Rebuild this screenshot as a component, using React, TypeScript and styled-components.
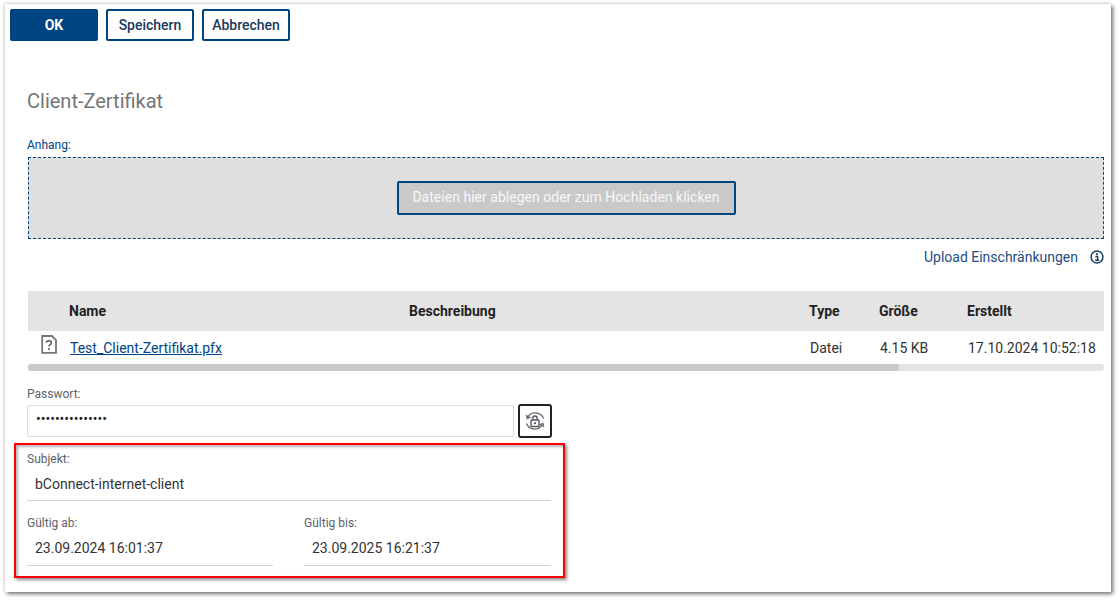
import React from "react";
import styled, { createGlobalStyle } from "styled-components";

const Global = createGlobalStyle`
  html, body { margin: 0; padding: 0; background: #fff; }
  body { font-family: Roboto, "Liberation Sans", sans-serif; width: 1120px; height: 601px; overflow: hidden; }
`;

const Panel = styled.div`
  position: relative;
  box-sizing: border-box;
  width: 1106px;
  height: 588px;
  margin: 4px 0 0 5px;
  padding: 5px 7px 0 22px;
  background: #fff;
  box-shadow: 2px 2px 4px rgba(0,0,0,.55), -1px -1px 3px rgba(0,0,0,.12);
`;

const Toolbar = styled.div`
  display: flex;
  gap: 8px;
  margin-left: -17px;
`;

const Button = styled.button<{ $primary?: boolean }>`
  box-sizing: border-box;
  width: 88px;
  height: 32px;
  padding: 0;
  border: 2px solid #004481;
  border-radius: 2px;
  background: ${p => (p.$primary ? "#004481" : "#fff")};
  color: ${p => (p.$primary ? "#fff" : "#1c3a5c")};
  font: ${p => (p.$primary ? 700 : 500)} 14px Roboto, sans-serif;
`;

const Title = styled.h1`
  margin: 48px 0 0;
  height: 24px;
  font: 400 20px/24px Roboto, sans-serif;
  color: #757575;
`;

const AttachLabel = styled.div`
  margin-top: 25px;
  height: 14px;
  font: 400 12px/14px Roboto, sans-serif;
  color: #004481;
`;

const DropZone = styled.div`
  box-sizing: border-box;
  margin: 5px 0 0 1px;
  height: 82px;
  display: flex;
  align-items: center;
  justify-content: center;
  padding-bottom: 1px;
  background: #dfdfdf;
  border: 1px dashed #004481;
`;

const DropButton = styled.div`
  box-sizing: border-box;
  width: 339px;
  height: 34px;
  padding-bottom: 2px;
  display: flex;
  align-items: center;
  justify-content: center;
  background: #c9c9c9;
  border: 2px solid #004481;
  border-radius: 2px;
  color: #f8f8f8;
  font: 400 14px Roboto, sans-serif;
  letter-spacing: 0.02px;
`;

const UploadRow = styled.div`
  display: flex;
  justify-content: flex-end;
  align-items: center;
  gap: 12px;
  height: 18px;
  margin-top: 9px;
  font: 400 14px/18px Roboto, sans-serif;
  color: #1e4e82;
`;

const Table = styled.div`
  margin: 25px 0 0 1px;
`;

const Row = styled.div<{ $head?: boolean }>`
  display: grid;
  grid-template-columns: 41px 340px 400px 70px 88px 1fr;
  align-items: center;
  height: ${p => (p.$head ? 40 : 33)}px;
  background: ${p => (p.$head ? "#e4e4e4" : "#fff")};
  color: ${p => (p.$head ? "#222" : "#333")};
  font: ${p => (p.$head ? 700 : 400)} 14px Roboto, sans-serif;
`;

const Cell = styled.div<{ $shift?: number }>`
  padding-left: ${p => p.$shift ?? 0}px;
  white-space: nowrap;
`;

const FileLink = styled.a`
  color: #004481;
  text-decoration: underline;
  padding-left: 1px;
`;

const FileIcon = styled.svg`
  display: block;
  margin: -6px 0 0 13px;
`;

const Track = styled.div`
  height: 7px;
  background: #e4e4e4;
  border-radius: 3px;
`;

const Thumb = styled.div`
  height: 100%;
  background: #c8c8c8;
  border-radius: 3px;
`;

const FieldLabel = styled.div<{ $top: number }>`
  margin-top: ${p => p.$top}px;
  height: 14px;
  font: 400 12px/14px Roboto, sans-serif;
  color: #5f5f6b;
`;

const PassRow = styled.div`
  display: flex;
  align-items: center;
  gap: 4px;
  margin-top: 3px;
  height: 34px;
`;

const PassInput = styled.div`
  box-sizing: border-box;
  width: 487px;
  height: 32px;
  padding: 0 8px 5px;
  display: flex;
  align-items: center;
  border: 1px solid #dcdcdc;
  border-radius: 2px;
  color: #222;
  font: 400 14px Roboto, sans-serif;
`;

const IconButton = styled.div`
  box-sizing: border-box;
  width: 34px;
  height: 34px;
  display: flex;
  align-items: center;
  justify-content: center;
  border: 2px solid #222;
  border-radius: 3px;
  background: #fff;
`;

const Value = styled.div<{ $width: number; $height: number }>`
  box-sizing: border-box;
  width: ${p => p.$width}px;
  height: ${p => p.$height}px;
  padding: 8px 8px 0;
  border-bottom: 1px solid #d2d2d2;
  font: 400 14px/20px Roboto, sans-serif;
  color: #333;
`;

const DateGrid = styled.div`
  display: flex;
  gap: 31px;
`;

const DateCol = styled.div``;

const Annotation = styled.div`
  position: absolute;
  left: 9px;
  top: 439px;
  width: 551px;
  height: 135px;
  box-sizing: border-box;
  border: 2px solid #f00;
  box-shadow: 2px 2px 3px rgba(0,0,0,.45), inset 2px 2px 3px rgba(0,0,0,.3);
  pointer-events: none;
`;

export default function App() {
  return (
    <>
      <Global />
      <Panel>
        <Toolbar>
          <Button $primary>OK</Button>
          <Button>Speichern</Button>
          <Button>Abbrechen</Button>
        </Toolbar>
        <Title>Client-Zertifikat</Title>
        <AttachLabel>Anhang:</AttachLabel>
        <DropZone>
          <DropButton>Dateien hier ablegen oder zum Hochladen klicken</DropButton>
        </DropZone>
        <UploadRow>
          <span>Upload Einschränkungen</span>
          <svg width="14" height="14" viewBox="0 0 14 14" fill="none">
            <circle cx="7" cy="7" r="5.9" stroke="#1e3f63" strokeWidth="1.5" />
            <circle cx="7" cy="4.1" r="1.1" fill="#1e3f63" />
            <path d="M5.4 6.4H7.6V9.8M5.2 10.2H9.2" stroke="#1e3f63" strokeWidth="1.5" />
          </svg>
        </UploadRow>
        <Table>
          <Row $head>
            <Cell />
            <Cell>Name</Cell>
            <Cell>Beschreibung</Cell>
            <Cell>Type</Cell>
            <Cell>Größe</Cell>
            <Cell>Erstellt</Cell>
          </Row>
          <Row>
            <Cell>
              <FileIcon width="16" height="19" viewBox="0 0 16 19" fill="none">
                <path d="M1.2 1H11L15 5V17.8H1.2Z" stroke="#6f7880" strokeWidth="1.8" />
                <path d="M5.4 7.8C5.4 5 10.4 5 10.4 7.8C10.4 9.8 8 9.6 8 11.6" stroke="#555" strokeWidth="1.5" />
                <circle cx="8" cy="14" r="1" fill="#555" />
              </FileIcon>
            </Cell>
            <Cell><FileLink href="#">Test_Client-Zertifikat.pfx</FileLink></Cell>
            <Cell />
            <Cell $shift={1}>Datei</Cell>
            <Cell $shift={1}>4.15 KB</Cell>
            <Cell $shift={1}>17.10.2024 10:52:18</Cell>
          </Row>
          <Track>
            <Thumb style={{ width: `${(871 / 1076) * 100}%` }} />
          </Track>
        </Table>
        <FieldLabel $top={16}>Passwort:</FieldLabel>
        <PassRow>
          <PassInput>•••••••••••••••</PassInput>
          <IconButton>
            <svg width="24" height="24" viewBox="0 0 24 24" fill="none">
              <path d="M5 7.6A9 9 0 0 1 20.6 9.5" stroke="#6f7378" strokeWidth="1.4" />
              <path d="M2.6 5.4L3.6 10.6L8.4 8.4Z" fill="#6f7378" />
              <path d="M19 16.4A9 9 0 0 1 3.4 14.5" stroke="#6f7378" strokeWidth="1.4" />
              <path d="M21.4 18.6L20.4 13.4L15.6 15.6Z" fill="#6f7378" />
              <rect x="8" y="11" width="8" height="6.5" rx="0.8" stroke="#55595e" strokeWidth="1.4" />
              <path d="M9.8 11V9.2A2.2 2.2 0 0 1 14.2 9.2V11" stroke="#55595e" strokeWidth="1.4" />
              <circle cx="12" cy="14.2" r="1.1" fill="#55595e" />
            </svg>
          </IconButton>
        </PassRow>
        <FieldLabel $top={14}>Subjekt:</FieldLabel>
        <Value $width={524} $height={35}>bConnect-internet-client</Value>
        <DateGrid>
          <DateCol>
            <FieldLabel $top={15}>Gültig ab:</FieldLabel>
            <Value $width={246} $height={36}>23.09.2024 16:01:37</Value>
          </DateCol>
          <DateCol>
            <FieldLabel $top={15}>Gültig bis:</FieldLabel>
            <Value $width={247} $height={36}>23.09.2025 16:21:37</Value>
          </DateCol>
        </DateGrid>
        <Annotation />
      </Panel>
    </>
  );
}
